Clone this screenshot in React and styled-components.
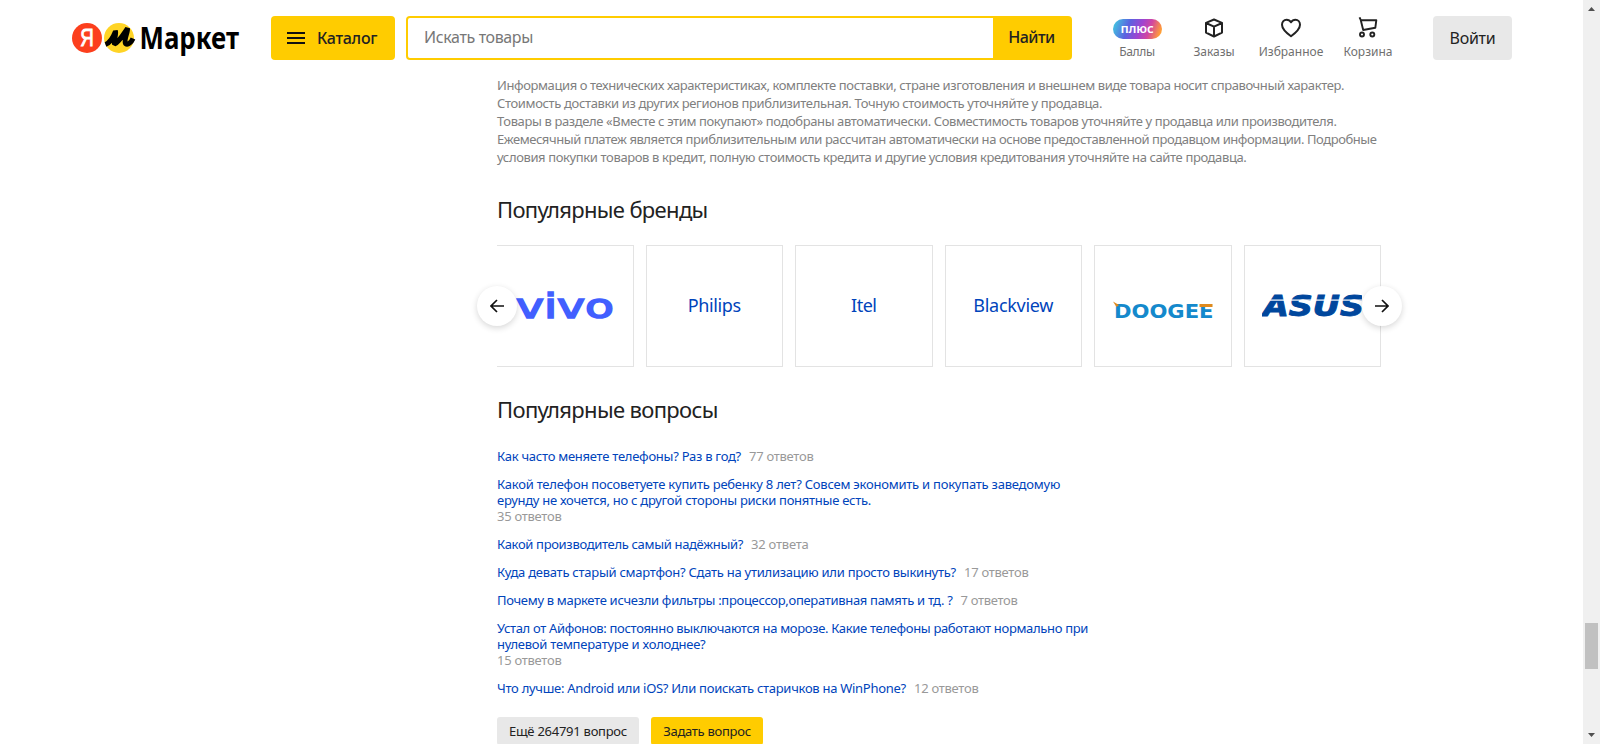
import React from "react";
import styled, { createGlobalStyle, css } from "styled-components";

const GlobalStyle = createGlobalStyle`
  * { box-sizing: border-box; }
  html, body { margin: 0; height: 100%; overflow: hidden; background: #fff; }
  body { font-family: "Noto Sans", "Open Sans", sans-serif; color: #222; }
  button { font-family: inherit; border: 0; padding: 0; cursor: pointer; }
`;

const spaced = css`
  letter-spacing: ${(p) => p.$ls || 0}px;
  white-space: nowrap;
`;

const Window = styled.div`
  display: flex;
  height: 100vh;
  overflow: hidden;
`;

const Page = styled.div`
  flex: 1;
  min-width: 0;
  overflow: hidden;
`;

const Header = styled.header`
  display: flex;
  align-items: flex-start;
  height: 76px;
  padding: 16px 0 0 72px;
`;

const Logo = styled.a`
  width: 199px;
  height: 44px;
  flex: none;
  svg { display: block; overflow: visible; }
`;

const CatalogButton = styled.button`
  display: flex;
  align-items: center;
  gap: 12px;
  width: 124px;
  height: 44px;
  padding-left: 16px;
  margin-right: 11px;
  border-radius: 4px;
  background: #fc0;
  color: #222;
  font-size: 16px;
  font-weight: 500;
  line-height: 44px;
  ${spaced}
`;

const Search = styled.form`
  display: flex;
  width: 666px;
  height: 44px;
  border-radius: 4px;
  background: #fc0;
  padding: 2px 0 2px 2px;
`;

const SearchField = styled.div`
  width: 585px;
  padding-left: 16px;
  border-radius: 2px 0 0 2px;
  background: #fff;
  color: #777;
  font-size: 16px;
  line-height: 39px;
  ${spaced}
`;

const FindButton = styled.button`
  flex: 1;
  padding: 0 2px 2px 0;
  background: transparent;
  color: #222;
  font-size: 16px;
  font-weight: 500;
  line-height: 38px;
  ${spaced}
`;

const Nav = styled.nav`
  display: flex;
  margin-left: 26.5px;
`;

const NavItem = styled.a`
  display: flex;
  flex-direction: column;
  align-items: center;
  width: 77px;
  color: #707070;
  font-size: 12px;
  line-height: 16px;
  ${spaced}
`;

const NavIcon = styled.span`
  display: flex;
  align-items: center;
  height: 24px;
  margin-bottom: 4px;
`;

const PlusBadge = styled.span`
  width: 49px;
  height: 20px;
  margin-top: 2px;
  border-radius: 10px;
  background: linear-gradient(110deg, #3fcbe0 2%, #5b62e0 32%, #a044d0 55%, #d246a0 72%, #ff9b3a 92%, #ffb52e);
  color: #fff;
  font: 600 13px/18px "Noto Sans", sans-serif;
  letter-spacing: -0.1px;
  text-align: center;
`;

const LoginButton = styled.button`
  width: 79px;
  height: 44px;
  margin-left: 26.5px;
  border-radius: 4px;
  background: #e8e8e8;
  color: #222;
  font-size: 16px;
  line-height: 44px;
  ${spaced}
`;

const Main = styled.main`
  width: 884px;
  margin-left: 497px;
`;

const Legal = styled.div`
  color: #808080;
  font-size: 13px;
  line-height: 18px;
`;

const Line = styled.div`
  ${spaced}
`;

const Title = styled.h2`
  margin: ${(p) => p.$top}px 0 ${(p) => p.$bottom}px;
  height: 28px;
  font-size: 22px;
  font-weight: 400;
  line-height: 28px;
  color: #222;
  ${spaced}
`;

const Carousel = styled.section`
  position: relative;
`;

const Viewport = styled.div`
  overflow: hidden;
`;

const Track = styled.div`
  display: grid;
  grid-template-columns: repeat(6, 1fr);
  gap: 12px;
  width: 885px;
  margin-left: -1px;
`;

const BrandCard = styled.a`
  display: flex;
  align-items: center;
  justify-content: center;
  height: 122px;
  padding-bottom: 3px;
  border: 1px solid #e3e3e3;
  color: #04b;
  font-size: 18px;
  line-height: 24px;
  ${spaced}
`;

const ArrowButton = styled.button`
  position: absolute;
  top: 41px;
  ${(p) => p.$side}: ${(p) => (p.$side === "left" ? -20 : -21)}px;
  display: flex;
  align-items: center;
  justify-content: center;
  width: 40px;
  height: 40px;
  border-radius: 50%;
  background: #fff;
  box-shadow: 0 2px 6px rgba(0, 0, 0, 0.16);
`;

const QuestionList = styled.ul`
  display: flex;
  flex-direction: column;
  gap: 12px;
  margin: 0;
  padding: 0;
  list-style: none;
  font-size: 13px;
  line-height: 16px;
`;

const Question = styled.li`
  display: flex;
  flex-direction: ${(p) => (p.$stacked ? "column" : "row")};
  gap: ${(p) => (p.$stacked ? 0 : 8)}px;
`;

const QuestionLink = styled.a`
  color: #04b;
`;

const Answers = styled.span`
  color: #999;
  ${spaced}
`;

const Actions = styled.div`
  display: flex;
  gap: 12px;
  margin-top: 21px;
`;

const ActionButton = styled.button`
  width: ${(p) => p.$width}px;
  height: 28px;
  border-radius: 3px;
  background: ${(p) => (p.$primary ? "#fc0" : "#e8e8e8")};
  color: #222;
  font-size: 13px;
  line-height: 28px;
  ${spaced}
`;

const Scrollbar = styled.aside`
  display: flex;
  flex-direction: column;
  align-items: center;
  width: 17px;
  padding: 7px 0;
  background: #f0f0f0;
`;

const Thumb = styled.div`
  width: 13px;
  height: 46px;
  margin: 612px 0 auto;
  background: #c1c1c1;
`;

const ScrollArrow = ({ down }) => (
  <svg width="7" height="4" viewBox="0 0 7 4">
    <path d={down ? "M0 0H7L3.5 4Z" : "M0 4H7L3.5 0Z"} fill="#505050" />
  </svg>
);

const MarketLogo = () => (
  <svg width="199" height="44" viewBox="0 0 199 44">
    <circle cx="15" cy="22" r="15" fill="#fc3f1d" />
    <text x="8.3" y="30.3" fontFamily="Liberation Sans" fontSize="23.500" fontWeight="400" fill="#fff" stroke="#fff" strokeWidth=".9" textLength="13.500" lengthAdjust="spacingAndGlyphs">Я</text>
    <circle cx="47" cy="22" r="15" fill="#ffd426" />
    <path d="M33.500 28.500C38 27 41.500 20.500 43.500 15.500C44.500 17 41.500 25 42.500 28C47 26 51 19 55.500 12.500C56 16 51.500 24 53.500 27.500C56 29.500 59.500 26 61 22.500" fill="none" stroke="#000" strokeWidth="5" strokeLinejoin="bevel" />
    <text x="67.500" y="33" fontFamily="Noto Sans" fontSize="31" fontWeight="700" fill="#000" textLength="99.500" lengthAdjust="spacingAndGlyphs">Маркет</text>
  </svg>
);

const MenuIcon = () => (
  <svg width="18" height="12" viewBox="0 0 18 12">
    <path d="M0 1H18M0 6H18M0 11H18" stroke="#111" strokeWidth="2" />
  </svg>
);

const BoxIcon = () => (
  <svg width="20" height="20" viewBox="0 0 20 20" fill="none" stroke="#222" strokeWidth="2" strokeLinejoin="round">
    <path d="M10 1.500L18 4.800V14.600L10 18.500L2 14.600V4.800ZM2 5L10 8.700L18 5M10 8.700V18.500" />
  </svg>
);

const HeartIcon = () => (
  <svg width="22" height="20" viewBox="0 0 22 20" fill="none" stroke="#222" strokeWidth="2" strokeLinejoin="round">
    <path d="M11 18.300C7 15.300 2 11.200 2 6.700C2 3.700 4 1.700 6.500 1.700C8.500 1.700 10 2.600 11 4.300C12 2.600 13.500 1.700 15.500 1.700C18 1.700 20 3.700 20 6.700C20 11.200 15 15.300 11 18.300Z" />
  </svg>
);

const CartIcon = () => (
  <svg width="20" height="22" viewBox="0 0 20 22" fill="none" stroke="#222" strokeWidth="1.900" strokeLinejoin="round">
    <path d="M1.500 .300L2.600 2.600L5.200 13L17.300 10.800L18.300 3.300H3" />
    <circle cx="4" cy="17.500" r="2" />
    <circle cx="14.300" cy="17.500" r="2" />
  </svg>
);

const ArrowIcon = ({ right }) => (
  <svg width="14" height="14" viewBox="0 0 14 14" fill="none" stroke="#111" strokeWidth="1.700">
    <path d={right ? "M0 7H12.500M7 1L13 7L7 13" : "M14 7H1.500M7 1L1 7L7 13"} />
  </svg>
);

const VivoLogo = () => (
  <svg width="100" height="80" viewBox="0 -1 100 80">
    <text x="1" y="52" fontFamily="DejaVu Sans" fontSize="33" fill="#415fff" stroke="#415fff" strokeWidth="1.600" textLength="98" lengthAdjust="spacingAndGlyphs">vivo</text>
  </svg>
);

const DoogeeLogo = () => (
  <svg width="100" height="80" viewBox="0 -1 100 80">
    <text x="1" y="52" fontFamily="DejaVu Sans" fontSize="19" fontWeight="700" fill="#1489cc" textLength="99.500" lengthAdjust="spacingAndGlyphs">DOOGEE</text>
    <path d="M0 35.500L6 39L3.500 41Z" fill="#e08a1e" />
    <rect x="86.500" y="38" width="13" height="3" fill="#e08a1e" />
  </svg>
);

const AsusLogo = () => (
  <svg width="100" height="80" viewBox="0 -1 100 80">
    <text x="1" y="49.500" fontFamily="DejaVu Sans" fontSize="27.500" fontStyle="italic" fontWeight="700" fill="#00479d" stroke="#00479d" strokeWidth=".9" textLength="101" lengthAdjust="spacingAndGlyphs">ASUS</text>
    <rect x="8" y="33.500" width="92" height="1.200" fill="#fff" />
  </svg>
);

const legal = [
  ["Информация о технических характеристиках, комплекте поставки, стране изготовления и внешнем виде товара носит справочный характер.", -0.401],
  ["Стоимость доставки из других регионов приблизительная. Точную стоимость уточняйте у продавца.", -0.362],
  ["Товары в разделе «Вместе с этим покупают» подобраны автоматически. Совместимость товаров уточняйте у продавца или производителя.", -0.381],
  ["Ежемесячный платеж является приблизительным или рассчитан автоматически на основе предоставленной продавцом информации. Подробные", -0.43],
  ["условия покупки товаров в кредит, полную стоимость кредита и другие условия кредитования уточняйте на сайте продавца.", -0.38],
];

const brands = [
  { logo: <VivoLogo /> },
  { name: "Philips", ls: -0.37 },
  { name: "Itel", ls: -0.5 },
  { name: "Blackview", ls: -0.27 },
  { logo: <DoogeeLogo /> },
  { logo: <AsusLogo /> },
];

const questions = [
  { lines: [["Как часто меняете телефоны? Раз в год?", -0.26]], answers: "77 ответов", ls: -0.27 },
  {
    lines: [
      ["Какой телефон посоветуете купить ребенку 8 лет? Совсем экономить и покупать заведомую", -0.229],
      ["ерунду не хочется, но с другой стороны риски понятные есть.", -0.27],
    ],
    answers: "35 ответов",
    ls: -0.27,
  },
  { lines: [["Какой производитель самый надёжный?", -0.326]], answers: "32 ответа", ls: -0.22 },
  { lines: [["Куда девать старый смартфон? Сдать на утилизацию или просто выкинуть?", -0.259]], answers: "17 ответов", ls: -0.27 },
  { lines: [["Почему в маркете исчезли фильтры :процессор,оперативная память и тд. ?", -0.31]], answers: "7 ответов", ls: -0.31 },
  {
    lines: [
      ["Устал от Айфонов: постоянно выключаются на морозе. Какие телефоны работают нормально при", -0.331],
      ["нулевой температуре и холоднее?", -0.245],
    ],
    answers: "15 ответов",
    ls: -0.27,
  },
  { lines: [["Что лучше: Android или iOS? Или поискать старичков на WinPhone?", -0.281]], answers: "12 ответов", ls: -0.27 },
];

export default function App() {
  return (
    <Window>
      <GlobalStyle />
      <Page>
        <Header>
          <Logo><MarketLogo /></Logo>
          <CatalogButton $ls={-0.3}><MenuIcon />Каталог</CatalogButton>
          <Search>
            <SearchField $ls={-0.37}>Искать товары</SearchField>
            <FindButton type="button" $ls={-0.5}>Найти</FindButton>
          </Search>
          <Nav>
            <NavItem $ls={-0.3}><NavIcon><PlusBadge>плюс</PlusBadge></NavIcon>Баллы</NavItem>
            <NavItem $ls={-0.06}><NavIcon><BoxIcon /></NavIcon>Заказы</NavItem>
            <NavItem><NavIcon><HeartIcon /></NavIcon>Избранное</NavItem>
            <NavItem><NavIcon><CartIcon /></NavIcon>Корзина</NavItem>
          </Nav>
          <LoginButton $ls={-0.24}>Войти</LoginButton>
        </Header>
        <Main>
          <Legal>
            {legal.map(([text, ls]) => <Line key={text} $ls={ls}>{text}</Line>)}
          </Legal>
          <Title $top={29} $bottom={22} $ls={-0.66}>Популярные бренды</Title>
          <Carousel>
            <Viewport>
              <Track>
                {brands.map((b, i) => <BrandCard key={i} $ls={b.ls}>{b.logo || b.name}</BrandCard>)}
              </Track>
            </Viewport>
            <ArrowButton $side="left"><ArrowIcon /></ArrowButton>
            <ArrowButton $side="right"><ArrowIcon right /></ArrowButton>
          </Carousel>
          <Title $top={28} $bottom={25} $ls={-0.65}>Популярные вопросы</Title>
          <QuestionList>
            {questions.map((q) => (
              <Question key={q.lines[0][0]} $stacked={q.lines.length > 1}>
                <QuestionLink>
                  {q.lines.map(([text, ls]) => <Line key={text} $ls={ls}>{text}</Line>)}
                </QuestionLink>
                <Answers $ls={q.ls}>{q.answers}</Answers>
              </Question>
            ))}
          </QuestionList>
          <Actions>
            <ActionButton $width={142} $ls={-0.26}>Ещё 264791 вопрос</ActionButton>
            <ActionButton $width={112} $primary $ls={-0.28}>Задать вопрос</ActionButton>
          </Actions>
        </Main>
      </Page>
      <Scrollbar>
        <ScrollArrow />
        <Thumb />
        <ScrollArrow down />
      </Scrollbar>
    </Window>
  );
}
